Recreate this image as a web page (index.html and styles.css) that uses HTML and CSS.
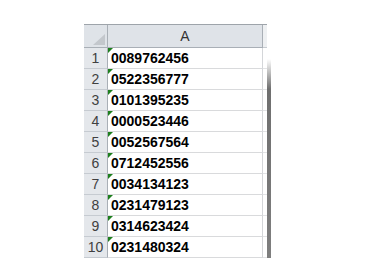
FILE: index.html
```html
<!DOCTYPE html>
<html>
<head>
<meta charset="utf-8">
<link rel="stylesheet" href="styles.css">
</head>
<body>
<div class="sheet">
  <div class="row head">
    <div class="rh corner"><span class="tri"></span></div>
    <div class="cell colh">A</div>
    <div class="edge"></div>
  </div>
  <div class="row"><div class="rh">1</div><div class="cell"><span class="flag"></span>0089762456</div><div class="edge"></div></div>
  <div class="row"><div class="rh">2</div><div class="cell"><span class="flag"></span>0522356777</div><div class="edge"></div></div>
  <div class="row"><div class="rh">3</div><div class="cell"><span class="flag"></span>0101395235</div><div class="edge"></div></div>
  <div class="row"><div class="rh">4</div><div class="cell"><span class="flag"></span>0000523446</div><div class="edge"></div></div>
  <div class="row"><div class="rh">5</div><div class="cell"><span class="flag"></span>0052567564</div><div class="edge"></div></div>
  <div class="row"><div class="rh">6</div><div class="cell"><span class="flag"></span>0712452556</div><div class="edge"></div></div>
  <div class="row"><div class="rh">7</div><div class="cell"><span class="flag"></span>0034134123</div><div class="edge"></div></div>
  <div class="row"><div class="rh">8</div><div class="cell"><span class="flag"></span>0231479123</div><div class="edge"></div></div>
  <div class="row"><div class="rh">9</div><div class="cell"><span class="flag"></span>0314623424</div><div class="edge"></div></div>
  <div class="row"><div class="rh">10</div><div class="cell"><span class="flag"></span>0231480324</div><div class="edge"></div></div>
  <div class="shadow-r"></div>
  <div class="shadow-b"></div>
</div>
</body>
</html>
```

FILE: styles.css
```css
html, body {
  margin: 0;
  padding: 0;
  background: #ffffff;
}
.sheet {
  position: relative;
  margin: 24px 0 0 84px;
  width: 183px;
  border-top: 1px solid #9ea4aa;
  font-family: "Liberation Sans", Arial, sans-serif;
}
.row {
  display: grid;
  grid-template-columns: 24px 155px 4px;
  height: 21px;
}
.row.head {
  height: 23px;
  background: #dfe3e8;
}
.rh {
  box-sizing: border-box;
  background: #e4e7eb;
  border-right: 1px solid #a9afb6;
  border-bottom: 1px solid #c6cbd1;
  color: #404040;
  font-size: 14px;
  display: flex;
  align-items: flex-end;
  justify-content: center;
  padding-bottom: 2px;
  line-height: 16px;
}
.head .rh {
  background: #dfe3e8;
  border-bottom: 1px solid #a9afb6;
  position: relative;
}
.tri {
  position: absolute;
  right: 2px;
  bottom: 2px;
  width: 0;
  height: 0;
  border-left: 12px solid transparent;
  border-bottom: 11px solid #c3c7cc;
}
.cell {
  box-sizing: border-box;
  position: relative;
  border-right: 1px solid #d4d6d9;
  border-bottom: 1px solid #d9dadc;
  font-size: 14px;
  font-weight: bold;
  color: #000;
  padding-left: 3px;
  display: flex;
  align-items: flex-end;
  padding-bottom: 3px;
  line-height: 14px;
}
.head .cell {
  border-right: 1px solid #a9afb6;
  border-bottom: 1px solid #a9afb6;
  font-weight: normal;
  font-size: 14px;
  color: #333;
  justify-content: center;
  align-items: center;
  padding: 0;
}
.edge {
  border-bottom: 1px solid #e2e3e5;
}
.head .edge {
  background: #eef0f2;
  border-bottom: 1px solid #c7ccd1;
}
.flag {
  position: absolute;
  left: 0;
  top: 0;
  width: 0;
  height: 0;
  border-top: 5px solid #1d7f1d;
  border-right: 5px solid transparent;
}
.shadow-r {
  position: absolute;
  left: 183px;
  top: 34px;
  width: 4px;
  bottom: -6px;
  background: linear-gradient(to bottom, rgba(110,110,110,0), #6f6f6f 30px, #7f7f7f);
}
.shadow-b {
  position: absolute;
  left: 12px;
  right: -4px;
  bottom: -6px;
  height: 4px;
  background: linear-gradient(to right, rgba(110,110,110,0), #7f7f7f 30px, #7f7f7f);
}
```
